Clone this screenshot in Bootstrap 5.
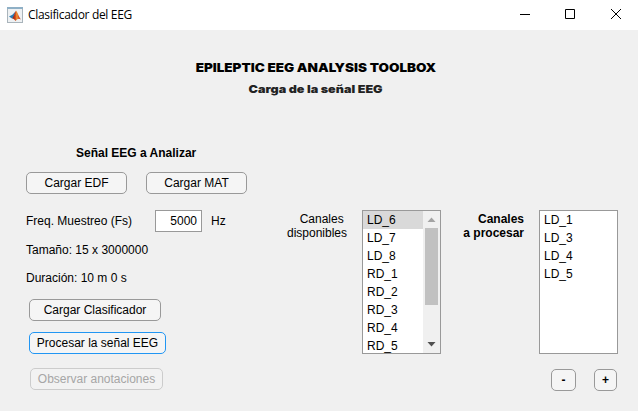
<!DOCTYPE html>
<html lang="es">
<head>
<meta charset="utf-8">
<meta name="viewport" content="width=device-width, initial-scale=1">
<title>Clasificador del EEG</title>
<link href="https://cdn.jsdelivr.net/npm/bootstrap@5.3.0/dist/css/bootstrap.min.css" rel="stylesheet">
<style>
body{width:638px;height:411px;overflow:hidden;background:#f0f0f0;color:#000;font:12px/14px "Liberation Sans",Arial,sans-serif}
.titlebar{height:30px;padding-left:7px}
.caption-text{font:12px/16px "Open Sans","Noto Sans",sans-serif;letter-spacing:-.32px;margin-left:5px}
.win-ctl{width:46px;height:30px}
.heading{font:900 12px/16px Inter,"Liberation Sans",sans-serif;margin:30px 7px 0 0}
.heading span,.subheading span{display:inline-block;transform:scaleX(1.125)}
.subheading{font:900 11px/16px Inter,"Liberation Sans",sans-serif;color:#222;margin:5px 7px 0 0}
.subheading span{transform:scaleX(1.145)}
.workspace{padding-left:26px;margin-top:49px}
.controls{width:221px}
.section-label{padding-left:50px;margin-bottom:12px;line-height:14px}
.tool-btn{font-size:12px;line-height:14px;height:22px;padding:0;border:1px solid #999;border-radius:5px;background:#f5f5f5;color:#000;transition:none}
.tool-btn.focused{border-color:#2196f3}
.tool-btn:disabled{background:#f2f2f2;border-color:#ccc;color:#a6a6a6;opacity:1}
.w-load{width:101px}
.freq{margin-top:16px;height:22px}
.freq label{width:129px}
.freq input{width:47px;height:22px;min-height:0;padding:0 4px;font-size:12px;line-height:14px;border:1px solid #999;border-radius:0;color:#000}
.unit{margin-left:9px}
.fact{line-height:14px}
.channels{margin-top:64px}
.ch-label{line-height:14px;padding-top:2px}
.listbox{width:79px;height:144px;border:1px solid #999;background:#fff;overflow:hidden}
.listbox .list-group-item{height:18px;line-height:18px;padding:0 0 0 4px;border:0;border-radius:0;color:#000;background:#fff;font-size:12px}
.listbox .list-group-item.picked{background:#d9d9d9}
.scroller{width:17px;background:#f0f0f0}
.scroller svg{display:block}
.thumb{width:13px;height:77px;background:#c1c1c1}
</style>
</head>
<body>
<header class="titlebar bg-white d-flex align-items-center">
  <svg width="16" height="16" viewBox="0 0 16 16">
    <defs><linearGradient id="peak" x1="0" x2="1"><stop offset="0" stop-color="#7c1f12"/><stop offset=".35" stop-color="#c83c18"/><stop offset=".55" stop-color="#f09a35"/><stop offset=".75" stop-color="#d9481c"/><stop offset="1" stop-color="#a52c12"/></linearGradient></defs>
    <rect x=".5" y=".5" width="15" height="15" fill="#eef1f3" stroke="#a9b4bb"/>
    <path d="M0 0h16v2H0z" fill="#8fb0c6"/>
    <path d="M2 9.500l3.400-1.700L8.500 4.500l-1.500 5.500L5 11.500z" fill="#287ab5"/>
    <path d="M5 11.500c1.700-1 2.500-6 4-8 1.600 1.500 2.800 6.500 5 9-2-1.500-3.400-1-5.400 1.500C7.800 13 7 11.500 5 11.500z" fill="url(#peak)"/>
  </svg>
  <span class="caption-text">Clasificador del EEG</span>
  <div class="d-flex ms-auto">
    <svg class="win-ctl" viewBox="0 0 46 30"><path d="M20 14.500h10" stroke="#000"/></svg>
    <svg class="win-ctl" viewBox="0 0 46 30"><path d="M19.500 9.500h9v9h-9z" fill="none" stroke="#000"/></svg>
    <svg class="win-ctl" viewBox="0 0 46 30"><path d="M19 9l10 10M29 9l-10 10" stroke="#000" fill="none"/></svg>
  </div>
</header>
<main>
  <h1 class="heading text-center"><span>EPILEPTIC EEG ANALYSIS TOOLBOX</span></h1>
  <h2 class="subheading text-center"><span>Carga de la señal EEG</span></h2>
  <div class="workspace d-flex">
    <section class="controls">
      <div class="section-label fw-bold">Señal EEG a Analizar</div>
      <div class="d-flex justify-content-between">
        <button class="btn tool-btn w-load">Cargar EDF</button>
        <button class="btn tool-btn w-load">Cargar MAT</button>
      </div>
      <div class="freq d-flex align-items-center">
        <label for="fs">Freq. Muestreo (Fs)</label>
        <input id="fs" class="form-control text-end" value="5000">
        <span class="unit">Hz</span>
      </div>
      <div class="fact" style="margin-top:11px">Tamaño: 15 x 3000000</div>
      <div class="fact" style="margin-top:14px">Duración: 10 m 0 s</div>
      <div class="d-flex flex-column align-items-start" style="margin:14px 0 0 3px">
        <button class="btn tool-btn" style="width:132px">Cargar Clasificador</button>
        <button class="btn tool-btn focused" style="width:137px;margin-top:11px">Procesar la señal EEG</button>
        <button class="btn tool-btn" style="width:133px;margin:14px 0 0 1px" disabled>Observar anotaciones</button>
      </div>
    </section>
    <section class="channels d-flex align-items-start">
      <div class="ch-label text-end" style="width:100px">Canales&nbsp;<br>disponibles</div>
      <div class="listbox d-flex" style="margin-left:15px">
        <ul class="list-group flex-fill">
          <li class="list-group-item picked">LD_6</li><li class="list-group-item">LD_7</li>
          <li class="list-group-item">LD_8</li><li class="list-group-item">RD_1</li>
          <li class="list-group-item">RD_2</li><li class="list-group-item">RD_3</li>
          <li class="list-group-item">RD_4</li><li class="list-group-item">RD_5</li>
        </ul>
        <div class="scroller d-flex flex-column align-items-center">
          <svg width="17" height="17" viewBox="0 0 17 17"><path d="M4.500 11h8l-4-4.500z" fill="#a3a3a3"/></svg>
          <div class="thumb"></div>
          <svg class="mt-auto" width="17" height="17" viewBox="0 0 17 17"><path d="M4.500 6h8l-4 4.500z" fill="#505050"/></svg>
        </div>
      </div>
      <div class="ch-label text-end fw-bold" style="width:83px">Canales<br>a procesar</div>
      <div style="margin-left:15px">
        <div class="listbox">
          <ul class="list-group">
            <li class="list-group-item">LD_1</li><li class="list-group-item">LD_3</li>
            <li class="list-group-item">LD_4</li><li class="list-group-item">LD_5</li>
          </ul>
        </div>
        <div class="d-flex" style="margin:15px 0 0 12px;gap:18px">
          <button class="btn tool-btn fw-bold" style="width:25px">-</button>
          <button class="btn tool-btn fw-bold" style="width:23px">+</button>
        </div>
      </div>
    </section>
  </div>
</main>
<script src="https://cdn.jsdelivr.net/npm/bootstrap@5.3.0/dist/js/bootstrap.bundle.min.js"></script>
</body>
</html>
